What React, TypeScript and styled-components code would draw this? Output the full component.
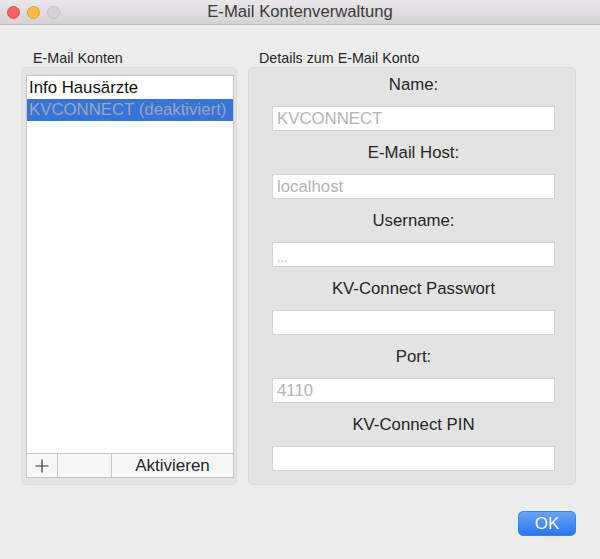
import React from "react";
import styled, { createGlobalStyle } from "styled-components";

const GlobalStyle = createGlobalStyle`
  html, body { margin: 0; padding: 0; background: #ececec; }
  body { font-family: "Liberation Sans", Arial, sans-serif; color: #262626; }
  * { box-sizing: border-box; }
`;

const Window = styled.div`
  width: 600px;
  height: 559px;
  display: flex;
  flex-direction: column;
  background: #ececec;
  overflow: hidden;
`;

const TitleBar = styled.div`
  height: 25px;
  flex: none;
  display: grid;
  grid-template-columns: 1fr auto 1fr;
  align-items: center;
  background: linear-gradient(#e9e7e9, #d4d2d4);
  border-bottom: 1px solid #bdbbbd;
`;

const Lights = styled.div`
  display: flex;
  gap: 7px;
  padding-left: 7px;
  padding-top: 1px;
`;

const Light = styled.span<{ $bg: string; $border: string }>`
  width: 13px;
  height: 13px;
  border-radius: 50%;
  background: ${(p) => p.$bg};
  border: 1px solid ${(p) => p.$border};
`;

const Title = styled.div`
  font-size: 16.7px;
  color: #3a3a3a;
  line-height: 24px;
`;

const Content = styled.div`
  flex: 1;
  display: flex;
  flex-direction: column;
  padding: 25px 24px 23px 21px;
`;

const Columns = styled.div`
  display: flex;
  gap: 11px;
  height: 435px;
`;

const Column = styled.div<{ $width?: number }>`
  display: flex;
  flex-direction: column;
  ${(p) => (p.$width ? `width: ${p.$width}px; flex: none;` : "flex: 1;")}
`;

const SectionLabel = styled.div<{ $indent: number }>`
  font-size: 14.3px;
  line-height: 17px;
  padding-left: ${(p) => p.$indent}px;
  color: #262626;
`;

const GroupBox = styled.div<{ $pad: string }>`
  flex: 1;
  display: flex;
  flex-direction: column;
  background: #e3e3e3;
  border: 1px solid #dadada;
  border-radius: 5px;
  padding: ${(p) => p.$pad};
`;

const List = styled.div`
  flex: 1;
  display: flex;
  flex-direction: column;
  background: #fff;
  border: 1px solid #c6c6c6;
`;

const Rows = styled.div`
  flex: 1;
  padding-top: 1px;
`;

const Row = styled.div<{ $selected?: boolean }>`
  height: 22px;
  line-height: 22px;
  padding-left: 2px;
  font-size: 16.8px;
  white-space: nowrap;
  background: ${(p) => (p.$selected ? "#3774d8" : "transparent")};
  color: ${(p) => (p.$selected ? "#9aa6bf" : "#111")};
`;

const ButtonBar = styled.div`
  height: 24px;
  display: flex;
  border-top: 1px solid #c6c6c6;
  background: #f7f7f7;
`;

const BarButton = styled.div<{ $width?: number }>`
  ${(p) => (p.$width ? `width: ${p.$width}px; flex: none;` : "flex: 1;")}
  display: flex;
  align-items: center;
  justify-content: center;
  font-size: 17px;
  color: #262626;
  & + & { border-left: 1px solid #c6c6c6; }
`;

const Field = styled.div`
  display: flex;
  flex-direction: column;
  & + & { margin-top: 12px; }
`;

const FieldLabel = styled.div`
  height: 20px;
  line-height: 20px;
  text-align: center;
  font-size: 16.8px;
  color: #262626;
  margin-bottom: 11px;
`;

const Input = styled.div<{ $small?: boolean }>`
  height: 25px;
  background: #fff;
  border: 1px solid #d4d4d4;
  padding-left: 4px;
  font-size: ${(p) => (p.$small ? "12px" : "16.8px")};
  line-height: ${(p) => (p.$small ? "30px" : "24px")};
  color: #b4b4b4;
  white-space: nowrap;
  overflow: hidden;
`;

const Footer = styled.div`
  display: flex;
  justify-content: flex-end;
  padding-top: 26px;
`;

const OkButton = styled.button`
  width: 58px;
  height: 25px;
  border: 1px solid #3d80ec;
  border-radius: 5px;
  background: linear-gradient(#67a5fa, #2c75f0);
  color: #fff;
  font-family: inherit;
  font-size: 17px;
  padding: 0;
`;

const fields: { label: string; value: string; small?: boolean }[] = [
  { label: "Name:", value: "KVCONNECT" },
  { label: "E-Mail Host:", value: "localhost" },
  { label: "Username:", value: "...", small: true },
  { label: "KV-Connect Passwort", value: "" },
  { label: "Port:", value: "4110" },
  { label: "KV-Connect PIN", value: "" },
];

const PlusIcon = () => (
  <svg width="14" height="14" viewBox="0 0 14 14">
    <path d="M7 0.5V13.5M0.5 7H13.5" stroke="#333" strokeWidth="1.2" fill="none" />
  </svg>
);

export default function App() {
  return (
    <>
      <GlobalStyle />
      <Window>
        <TitleBar>
          <Lights>
            <Light $bg="#fc605c" $border="#de4a44" />
            <Light $bg="#fdbc40" $border="#dea034" />
            <Light $bg="#d5d3d5" $border="#c3c1c3" />
          </Lights>
          <Title>E-Mail Kontenverwaltung</Title>
          <div />
        </TitleBar>
        <Content>
          <Columns>
            <Column $width={216}>
              <SectionLabel $indent={12}>E-Mail Konten</SectionLabel>
              <GroupBox $pad="7px 2px 6px 4px">
                <List>
                  <Rows>
                    <Row>Info Hausärzte</Row>
                    <Row $selected>KVCONNECT (deaktiviert)</Row>
                  </Rows>
                  <ButtonBar>
                    <BarButton $width={30}>
                      <PlusIcon />
                    </BarButton>
                    <BarButton $width={54} />
                    <BarButton>Aktivieren</BarButton>
                  </ButtonBar>
                </List>
              </GroupBox>
            </Column>
            <Column>
              <SectionLabel $indent={11}>Details zum E-Mail Konto</SectionLabel>
              <GroupBox $pad="7px 20px 12px 23px">
                {fields.map((f) => (
                  <Field key={f.label}>
                    <FieldLabel>{f.label}</FieldLabel>
                    <Input $small={f.small}>{f.value}</Input>
                  </Field>
                ))}
              </GroupBox>
            </Column>
          </Columns>
          <Footer>
            <OkButton>OK</OkButton>
          </Footer>
        </Content>
      </Window>
    </>
  );
}
